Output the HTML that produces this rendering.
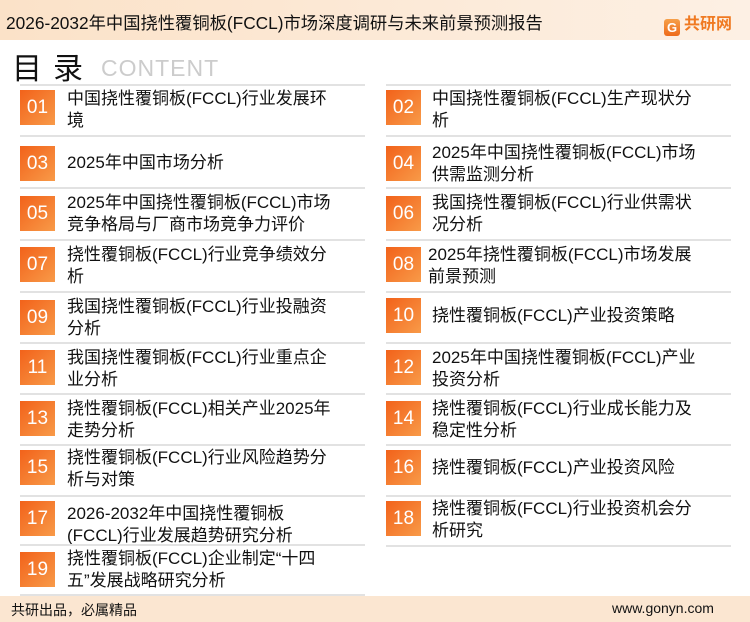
<!DOCTYPE html>
<html><head><meta charset="utf-8"><style>
*{margin:0;padding:0;box-sizing:border-box}
body{width:750px;height:622px;overflow:hidden;background:#fff;font-family:"Liberation Sans","Noto Sans CJK SC",sans-serif;position:relative;color:#111}
.hd{position:absolute;left:0;top:0;width:750px;height:40px;background:linear-gradient(90deg,#fbe2c8,#fdf0e4);}
.hd .t{position:absolute;left:6px;top:9px;font-size:17.3px;color:#111;white-space:nowrap}
.logo{position:absolute;left:664px;top:10px;font-size:16px;font-weight:bold;color:#f07a22;white-space:nowrap}
.logo b{display:inline-block;width:16px;height:17px;background:linear-gradient(#f6a04a,#ee6a1a);border-radius:3px;vertical-align:-3px;margin-right:4px;color:#fff;font-size:13px;text-align:center;line-height:17px}
.ml{position:absolute;top:44px;font-size:30px;color:#111;white-space:nowrap}
.ct{position:absolute;left:101px;top:55px;font-size:23px;color:#ccc;letter-spacing:1px}
.ln{position:absolute;height:2px;background:#e2e2e2}
.bx{position:absolute;width:35px;height:35px;background:linear-gradient(135deg,#f2621a,#f89a48);color:#fff;font-size:19px;text-align:center;line-height:35px}
.tx{position:absolute;font-size:17px;line-height:22px;color:#111;white-space:nowrap}
.ft{position:absolute;left:0;top:596px;width:750px;height:26px;background:#fbe6d1;font-size:14px}
.ft span{position:absolute;top:4px}
</style></head><body>
<div class="hd"><div class="t">2026-2032年中国挠性覆铜板(FCCL)市场深度调研与未来前景预测报告</div>
<div class="logo"><b>G</b>共研网</div></div>
<div class="ct">CONTENT</div><div class="ml" style="left:12px">目</div><div class="ml" style="left:53px">录</div>

<div class="ln" style="left:20px;top:84px;width:345px"></div><div class="ln" style="left:386px;top:84px;width:345px"></div>
<div class="bx" style="left:20px;top:90px">01</div><div class="tx" style="left:67px;top:88px">中国挠性覆铜板(FCCL)行业发展环<br>境</div>
<div class="bx" style="left:386px;top:90px">02</div><div class="tx" style="left:432px;top:88px">中国挠性覆铜板(FCCL)生产现状分<br>析</div>

<div class="ln" style="left:20px;top:135px;width:345px"></div><div class="ln" style="left:386px;top:135px;width:345px"></div>
<div class="bx" style="left:20px;top:146px">03</div><div class="tx" style="left:67px;top:152px">2025年中国市场分析</div>
<div class="bx" style="left:386px;top:146px">04</div><div class="tx" style="left:432px;top:142px">2025年中国挠性覆铜板(FCCL)市场<br>供需监测分析</div>

<div class="ln" style="left:20px;top:187px;width:345px"></div><div class="ln" style="left:386px;top:187px;width:345px"></div>
<div class="bx" style="left:20px;top:196px">05</div><div class="tx" style="left:67px;top:192px">2025年中国挠性覆铜板(FCCL)市场<br>竞争格局与厂商市场竞争力评价</div>
<div class="bx" style="left:386px;top:196px">06</div><div class="tx" style="left:432px;top:192px">我国挠性覆铜板(FCCL)行业供需状<br>况分析</div>

<div class="ln" style="left:20px;top:239px;width:345px"></div><div class="ln" style="left:386px;top:239px;width:345px"></div>
<div class="bx" style="left:20px;top:247px">07</div><div class="tx" style="left:67px;top:244px">挠性覆铜板(FCCL)行业竞争绩效分<br>析</div>
<div class="bx" style="left:386px;top:247px">08</div><div class="tx" style="left:428px;top:244px">2025年挠性覆铜板(FCCL)市场发展<br>前景预测</div>

<div class="ln" style="left:20px;top:291px;width:345px"></div><div class="ln" style="left:386px;top:291px;width:345px"></div>
<div class="bx" style="left:20px;top:300px">09</div><div class="tx" style="left:67px;top:296px">我国挠性覆铜板(FCCL)行业投融资<br>分析</div>
<div class="bx" style="left:386px;top:298px">10</div><div class="tx" style="left:432px;top:305px">挠性覆铜板(FCCL)产业投资策略</div>

<div class="ln" style="left:20px;top:342px;width:345px"></div><div class="ln" style="left:386px;top:342px;width:345px"></div>
<div class="bx" style="left:20px;top:350px">11</div><div class="tx" style="left:67px;top:347px">我国挠性覆铜板(FCCL)行业重点企<br>业分析</div>
<div class="bx" style="left:386px;top:350px">12</div><div class="tx" style="left:432px;top:347px">2025年中国挠性覆铜板(FCCL)产业<br>投资分析</div>

<div class="ln" style="left:20px;top:393px;width:345px"></div><div class="ln" style="left:386px;top:393px;width:345px"></div>
<div class="bx" style="left:20px;top:401px">13</div><div class="tx" style="left:67px;top:398px">挠性覆铜板(FCCL)相关产业2025年<br>走势分析</div>
<div class="bx" style="left:386px;top:401px">14</div><div class="tx" style="left:432px;top:398px">挠性覆铜板(FCCL)行业成长能力及<br>稳定性分析</div>

<div class="ln" style="left:20px;top:444px;width:345px"></div><div class="ln" style="left:386px;top:444px;width:345px"></div>
<div class="bx" style="left:20px;top:450px">15</div><div class="tx" style="left:67px;top:447px">挠性覆铜板(FCCL)行业风险趋势分<br>析与对策</div>
<div class="bx" style="left:386px;top:450px">16</div><div class="tx" style="left:432px;top:457px">挠性覆铜板(FCCL)产业投资风险</div>

<div class="ln" style="left:20px;top:495px;width:345px"></div><div class="ln" style="left:386px;top:495px;width:345px"></div>
<div class="bx" style="left:20px;top:501px">17</div><div class="tx" style="left:67px;top:503px">2026-2032年中国挠性覆铜板<br>(FCCL)行业发展趋势研究分析</div>
<div class="bx" style="left:386px;top:501px">18</div><div class="tx" style="left:432px;top:498px">挠性覆铜板(FCCL)行业投资机会分<br>析研究</div>

<div class="ln" style="left:20px;top:544px;width:345px"></div><div class="ln" style="left:386px;top:545px;width:345px"></div>
<div class="bx" style="left:20px;top:552px">19</div><div class="tx" style="left:67px;top:548px">挠性覆铜板(FCCL)企业制定“十四<br>五”发展战略研究分析</div>
<div class="ln" style="left:20px;top:594px;width:345px"></div>

<div class="ft"><span style="left:11px">共研出品，必属精品</span><span style="left:612px">www.gonyn.com</span></div>
</body></html>
